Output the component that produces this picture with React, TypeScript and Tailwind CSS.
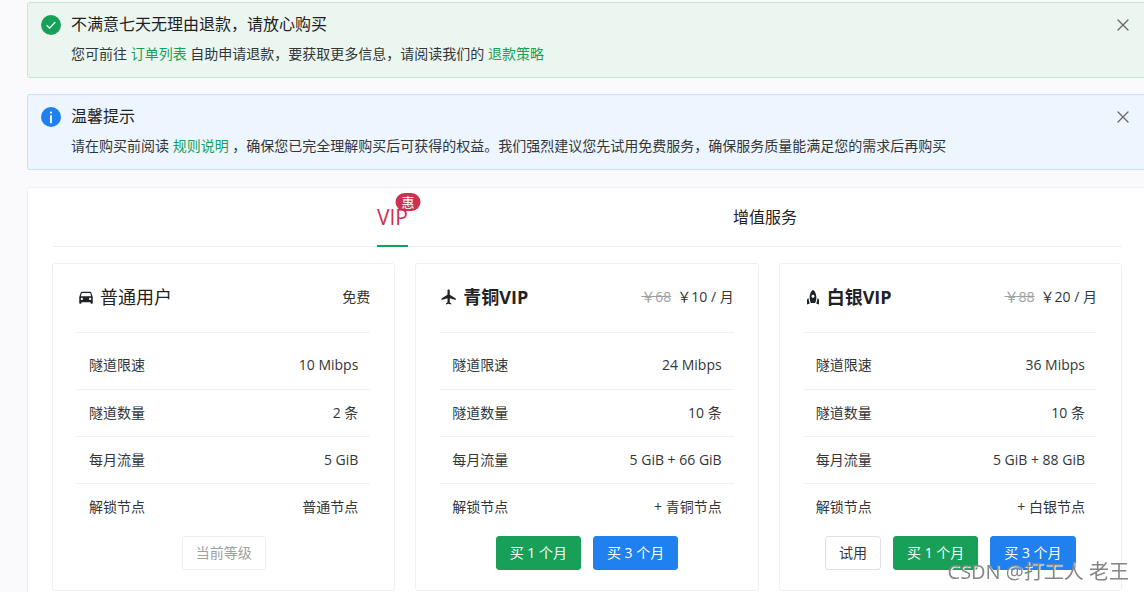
import React, { useState } from "react";
import { MdDirectionsCar, MdFlight, MdRocket } from "react-icons/md";

const plans = [
  {
    name: "普通用户",
    icon: MdDirectionsCar,
    vip: false,
    oldPrice: "",
    price: "免费",
    rows: [
      ["隧道限速", "10 Mibps"],
      ["隧道数量", "2 条"],
      ["每月流量", "5 GiB"],
      ["解锁节点", "普通节点"],
    ],
    actions: [{ label: "当前等级", kind: "disabled" }],
  },
  {
    name: "青铜VIP",
    icon: MdFlight,
    vip: true,
    oldPrice: "￥68",
    price: "￥10 / 月",
    rows: [
      ["隧道限速", "24 Mibps"],
      ["隧道数量", "10 条"],
      ["每月流量", "5 GiB + 66 GiB"],
      ["解锁节点", "+ 青铜节点"],
    ],
    actions: [
      { label: "买 1 个月", kind: "primary" },
      { label: "买 3 个月", kind: "info" },
    ],
  },
  {
    name: "白银VIP",
    icon: MdRocket,
    vip: true,
    oldPrice: "￥88",
    price: "￥20 / 月",
    rows: [
      ["隧道限速", "36 Mibps"],
      ["隧道数量", "10 条"],
      ["每月流量", "5 GiB + 88 GiB"],
      ["解锁节点", "+ 白银节点"],
    ],
    actions: [
      { label: "试用", kind: "default" },
      { label: "买 1 个月", kind: "primary" },
      { label: "买 3 个月", kind: "info" },
    ],
  },
];

const buttonStyles: Record<string, string> = {
  default: "border-[#e0e0e6] text-[#333639]",
  disabled: "border-[#efeff2] text-[#a0a1a3]",
  primary: "border-[#18a058] bg-[#18a058] text-white",
  info: "border-[#2080f0] bg-[#2080f0] text-white",
};

function SuccessIcon() {
  return (
    <svg viewBox="0 0 24 24" className="size-6" aria-hidden="true">
      <circle cx="12" cy="12" r="10" fill="#18a058" />
      <path
        d="M8 12.6l2.6 2.5L16 9.4"
        fill="none"
        stroke="#fff"
        strokeWidth="1.3"
        strokeLinecap="round"
        strokeLinejoin="round"
      />
    </svg>
  );
}

function InfoIcon() {
  return (
    <svg viewBox="0 0 24 24" className="size-6" aria-hidden="true">
      <circle cx="12" cy="12" r="10" fill="#2080f0" />
      <circle cx="12" cy="7.6" r="1.1" fill="#fff" />
      <path d="M12 10.8v6.6" stroke="#fff" strokeWidth="1.8" strokeLinecap="round" />
    </svg>
  );
}

function Alert({
  type,
  title,
  children,
}: {
  type: "success" | "info";
  title: string;
  children: React.ReactNode;
}) {
  const [open, setOpen] = useState(true);
  if (!open) return null;

  return (
    <section
      className={`flex items-start rounded-[3px] border py-3 pr-[15px] pl-[11px] ${
        type === "success" ? "border-[#c5e7d5] bg-[#ecf6f0]" : "border-[#c5dfff] bg-[#edf5ff]"
      }`}
    >
      <div className="-my-[2px] mr-2">{type === "success" ? <SuccessIcon /> : <InfoIcon />}</div>
      <div className="flex-1">
        <h2 className="text-[16px] leading-[19px] text-[#1f2225]">{title}</h2>
        <p className="mt-[9px] text-[14px] leading-[22px] text-[#333639]">{children}</p>
      </div>
      <button
        type="button"
        aria-label="关闭"
        onClick={() => setOpen(false)}
        className="mt-[2px] text-[#666] hover:text-black"
      >
        <svg viewBox="0 0 16 16" className="size-4" aria-hidden="true">
          <path d="M3 3l10 10M13 3L3 13" stroke="currentColor" strokeWidth="1.3" strokeLinecap="round" />
        </svg>
      </button>
    </section>
  );
}

function PlanCard({ plan }: { plan: (typeof plans)[number] }) {
  const Icon = plan.icon;

  return (
    <article className="rounded-[3px] border border-[#efeff5] px-6 pb-5">
      <header className="flex h-[69px] items-center justify-between border-b border-[#efeff5] pb-[2px]">
        <h3
          className={`flex items-center gap-[5px] text-[18px] leading-7 text-[#1f2225] ${
            plan.vip ? "font-bold" : "font-normal"
          }`}
        >
          <Icon className="size-[18px]" aria-hidden="true" />
          {plan.name}
        </h3>
        <div className="text-[14px] leading-[22px] text-[#333639]">
          {plan.oldPrice && <del className="mr-[6px] text-[#a0a1a3]">{plan.oldPrice}</del>}
          {plan.price}
        </div>
      </header>

      <table className="mt-[9px] w-full text-[14px] leading-[22px] text-[#333639]">
        <tbody>
          {plan.rows.map(([label, value]) => (
            <tr key={label} className="h-[47px] border-b border-[#efeff5] last:border-b-0">
              <th scope="row" className="pl-3 text-left font-normal">
                {label}
              </th>
              <td className="pr-3 text-right">{value}</td>
            </tr>
          ))}
        </tbody>
      </table>

      <div className="mt-[6px] flex justify-center gap-3">
        {plan.actions.map((action) => (
          <button
            key={action.label}
            type="button"
            disabled={action.kind === "disabled"}
            className={`h-[34px] rounded-[3px] border px-[13px] text-[14px] leading-[22px] whitespace-nowrap ${buttonStyles[action.kind]}`}
          >
            {action.label}
          </button>
        ))}
      </div>
    </article>
  );
}

export default function App() {
  return (
    <div className="h-screen overflow-hidden bg-[#fafafc] pt-[2px] pl-[27px] font-['Open_Sans','Noto_Sans_CJK_SC',sans-serif]">
      <div className="-mr-[3px]">
        <div className="flex flex-col gap-4">
          <Alert type="success" title="不满意七天无理由退款，请放心购买">
            您可前往{" "}
            <a href="#orders" className="text-[#18a058]">
              订单列表
            </a>{" "}
            自助申请退款，要获取更多信息，请阅读我们的{" "}
            <a href="#refund" className="text-[#18a058]">
              退款策略
            </a>
          </Alert>
          <Alert type="info" title="温馨提示">
            请在购买前阅读{" "}
            <a href="#rules" className="text-[#18a058]">
              规则说明
            </a>{" "}
            ，确保您已完全理解购买后可获得的权益。我们强烈建议您先试用免费服务，确保服务质量能满足您的需求后再购买
          </Alert>
        </div>

        <main className="mt-[17px] rounded-[3px] border border-[#efeff5] bg-white px-6 pb-6">
          <nav className="flex h-[59px] items-stretch justify-evenly border-b border-[#efeff5]">
            <button
              type="button"
              className="relative -mb-px border-b-2 border-[#18a058] text-[21px] leading-7 text-[#d03050]"
            >
              VIP
              <span className="absolute top-[5px] left-full h-[18px] -translate-x-1/2 rounded-full bg-[#d03050] px-[6px] text-[13px] leading-[18px] text-white">
                惠
              </span>
            </button>
            <button type="button" className="text-[16px] text-[#1f2225]">
              增值服务
            </button>
          </nav>

          <div className="mt-4 grid grid-cols-3 gap-5">
            {plans.map((plan) => (
              <PlanCard key={plan.name} plan={plan} />
            ))}
          </div>
        </main>
      </div>

      <div className="pointer-events-none fixed right-[15px] bottom-[6px] text-[20px] leading-7 text-[#858585] [text-shadow:1px_1px_1px_#fff]">
        CSDN @打工人 老王
      </div>
    </div>
  );
}
